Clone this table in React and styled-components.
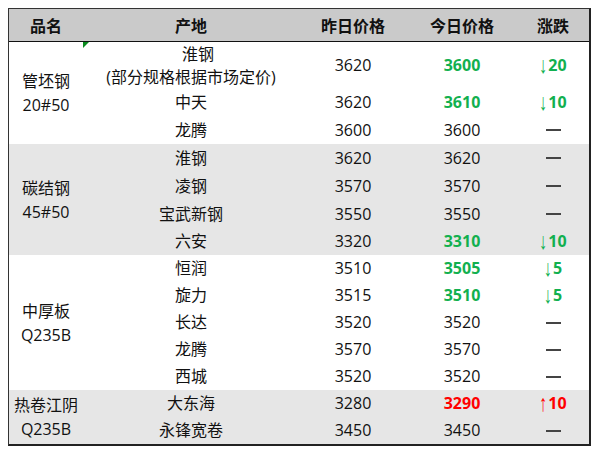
import React from 'react';
import styled, { createGlobalStyle } from 'styled-components';

const GlobalStyle = createGlobalStyle`
  body {
    margin: 8px;
    background: #fff;
    font-family: "Open Sans", "Noto Sans CJK SC", sans-serif;
    color: #111;
  }
`;

const COLS = '74px 216px 108px 110px 72px';

const Table = styled.div`
  width: 580px;
  border-left: 1px solid #333;
  border-top: 1px solid #333;
  border-right: 2px solid #222;
  border-bottom: 2px solid #222;
`;

const HeaderRow = styled.div`
  display: grid;
  grid-template-columns: ${COLS};
  height: 32px;
  background: #cacaca;
  border-bottom: 1px solid #111;
`;

const HeadCell = styled.div`
  display: flex;
  align-items: center;
  justify-content: center;
  font-size: 16px;
  font-weight: 700;
`;

const Group = styled.div`
  display: grid;
  grid-template-columns: ${COLS};
  grid-template-rows: ${props => props.rows};
  background: ${props => (props.shaded ? '#e6e6e6' : '#fff')};
`;

const Label = styled.div`
  grid-column: 1;
  grid-row: 1 / span ${props => props.span};
  display: flex;
  flex-direction: column;
  align-items: center;
  justify-content: center;
  font-size: 16px;
  line-height: 24px;
`;

const Cell = styled.div`
  position: relative;
  display: flex;
  flex-direction: column;
  align-items: center;
  justify-content: center;
  font-size: 16px;
  line-height: 23px;
  white-space: nowrap;
  font-weight: ${props => (props.tone ? 700 : 400)};
  color: ${props =>
    props.tone === 'down' ? '#12b04f' : props.tone === 'up' ? '#ff0000' : '#111'};
`;

const Arrow = styled.span`
  display: inline-block;
  font-family: "Liberation Sans", sans-serif;
  font-weight: 700;
  margin-right: 1px;
  transform: scaleY(1.45);
`;

const Dash = styled.span`
  display: block;
  width: 15px;
  height: 2px;
  background: #444;
`;

const Shifted = styled.span`
  padding-left: 14px;
`;

const Marker = styled.span`
  position: absolute;
  left: 0;
  top: 0;
  width: 0;
  height: 0;
  border-top: 6px solid #0a8a1e;
  border-right: 6px solid transparent;
`;

const groups = [
  {
    name: ['管坯钢', '20#50'],
    rows: '47px 27px 28px',
    items: [
      { place: 'double', y: 3620, t: 3600, d: 20, tone: 'down' },
      { place: '中天', y: 3620, t: 3610, d: 10, tone: 'down' },
      { place: '龙腾', y: 3600, t: 3600 },
    ],
  },
  {
    name: ['碳结钢', '45#50'],
    rows: '28px 28px 28px 27px',
    shaded: true,
    items: [
      { place: '淮钢', y: 3620, t: 3620 },
      { place: '凌钢', y: 3570, t: 3570 },
      { place: '宝武新钢', y: 3550, t: 3550 },
      { place: '六安', y: 3320, t: 3310, d: 10, tone: 'down' },
    ],
  },
  {
    name: ['中厚板', 'Q235B'],
    rows: 'repeat(5, 27px)',
    items: [
      { place: '恒润', y: 3510, t: 3505, d: 5, tone: 'down' },
      { place: '旋力', y: 3515, t: 3510, d: 5, tone: 'down' },
      { place: '长达', y: 3520, t: 3520 },
      { place: '龙腾', y: 3570, t: 3570 },
      { place: '西城', y: 3520, t: 3520 },
    ],
  },
  {
    name: ['热卷江阴', 'Q235B'],
    rows: '27px 27px',
    shaded: true,
    items: [
      { place: '大东海', y: 3280, t: 3290, d: 10, tone: 'up' },
      { place: '永锋宽卷', y: 3450, t: 3450 },
    ],
  },
];

const Place = ({ place }) => {
  if (place !== 'double') return <Cell>{place}</Cell>;
  return (
    <Cell>
      <Marker />
      <Shifted>淮钢</Shifted>
      <span>(部分规格根据市场定价)</span>
    </Cell>
  );
};

const Change = ({ d, tone }) => {
  if (!d) return <Cell><Dash /></Cell>;
  return (
    <Cell tone={tone}>
      <span>
        <Arrow>{tone === 'up' ? '↑' : '↓'}</Arrow>
        {d}
      </span>
    </Cell>
  );
};

const App = () => (
  <>
    <GlobalStyle />
    <Table>
      <HeaderRow>
        <HeadCell>品名</HeadCell>
        <HeadCell>产地</HeadCell>
        <HeadCell>昨日价格</HeadCell>
        <HeadCell>今日价格</HeadCell>
        <HeadCell>涨跌</HeadCell>
      </HeaderRow>
      {groups.map((g, gi) => (
        <Group key={gi} rows={g.rows} shaded={g.shaded}>
          <Label span={g.items.length}>
            {g.name.map(n => <span key={n}>{n}</span>)}
          </Label>
          {g.items.map((it, i) => (
            <React.Fragment key={i}>
              <Place place={it.place} />
              <Cell>{it.y}</Cell>
              <Cell tone={it.tone}>{it.t}</Cell>
              <Change d={it.d} tone={it.tone} />
            </React.Fragment>
          ))}
        </Group>
      ))}
    </Table>
  </>
);

export default App;
